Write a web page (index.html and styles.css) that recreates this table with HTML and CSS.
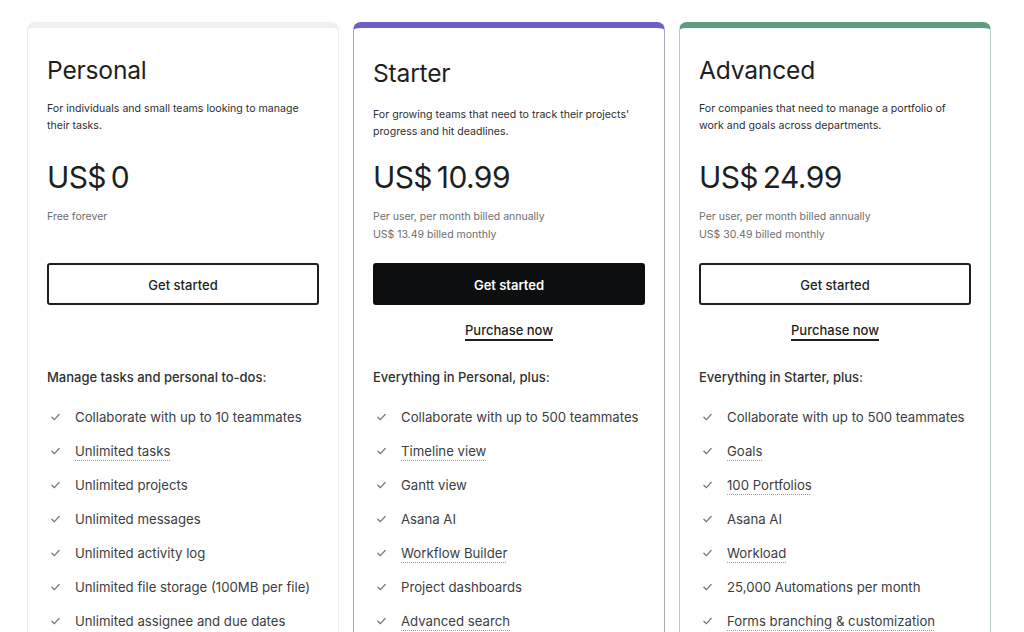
FILE: index.html
```html
<!DOCTYPE html>
<html lang="en">
<head>
<meta charset="utf-8">
<title>Pricing</title>
<link rel="stylesheet" href="styles.css">
</head>
<body>
<main class="plans">
  <section class="card card-personal">
    <div class="intro">
      <h2 class="title">Personal</h2>
      <p class="desc">For individuals and small teams looking to manage their tasks.</p>
    </div>
    <div class="price">US$&#8201;0</div>
    <div class="sub">Free forever</div>
    <a class="btn">Get started</a>
    <div class="purchase purchase-empty"></div>
    <h3 class="feat-head">Manage tasks and personal to-dos:</h3>
    <ul class="feats">
      <li><svg class="chk" viewBox="0 0 10 8"><path d="M1 4.2 L3.8 7 L9 1.2"/></svg><span>Collaborate with up to 10 teammates</span></li>
      <li><svg class="chk" viewBox="0 0 10 8"><path d="M1 4.2 L3.8 7 L9 1.2"/></svg><span class="dot">Unlimited tasks</span></li>
      <li><svg class="chk" viewBox="0 0 10 8"><path d="M1 4.2 L3.8 7 L9 1.2"/></svg><span>Unlimited projects</span></li>
      <li><svg class="chk" viewBox="0 0 10 8"><path d="M1 4.2 L3.8 7 L9 1.2"/></svg><span>Unlimited messages</span></li>
      <li><svg class="chk" viewBox="0 0 10 8"><path d="M1 4.2 L3.8 7 L9 1.2"/></svg><span>Unlimited activity log</span></li>
      <li><svg class="chk" viewBox="0 0 10 8"><path d="M1 4.2 L3.8 7 L9 1.2"/></svg><span>Unlimited file storage (100MB per file)</span></li>
      <li><svg class="chk" viewBox="0 0 10 8"><path d="M1 4.2 L3.8 7 L9 1.2"/></svg><span>Unlimited assignee and due dates</span></li>
    </ul>
  </section>

  <section class="card card-starter">
    <div class="intro">
      <h2 class="title">Starter</h2>
      <p class="desc">For growing teams that need to track their projects' progress and hit deadlines.</p>
    </div>
    <div class="price">US$&#8201;10.99</div>
    <div class="sub">Per user, per month billed annually<br>US$ 13.49 billed monthly</div>
    <a class="btn btn-dark">Get started</a>
    <a class="purchase">Purchase now</a>
    <h3 class="feat-head">Everything in Personal, plus:</h3>
    <ul class="feats">
      <li><svg class="chk" viewBox="0 0 10 8"><path d="M1 4.2 L3.8 7 L9 1.2"/></svg><span>Collaborate with up to 500 teammates</span></li>
      <li><svg class="chk" viewBox="0 0 10 8"><path d="M1 4.2 L3.8 7 L9 1.2"/></svg><span class="dot">Timeline view</span></li>
      <li><svg class="chk" viewBox="0 0 10 8"><path d="M1 4.2 L3.8 7 L9 1.2"/></svg><span>Gantt view</span></li>
      <li><svg class="chk" viewBox="0 0 10 8"><path d="M1 4.2 L3.8 7 L9 1.2"/></svg><span>Asana AI</span></li>
      <li><svg class="chk" viewBox="0 0 10 8"><path d="M1 4.2 L3.8 7 L9 1.2"/></svg><span class="dot">Workflow Builder</span></li>
      <li><svg class="chk" viewBox="0 0 10 8"><path d="M1 4.2 L3.8 7 L9 1.2"/></svg><span>Project dashboards</span></li>
      <li><svg class="chk" viewBox="0 0 10 8"><path d="M1 4.2 L3.8 7 L9 1.2"/></svg><span class="dot">Advanced search</span></li>
    </ul>
  </section>

  <section class="card card-advanced">
    <div class="intro">
      <h2 class="title">Advanced</h2>
      <p class="desc">For companies that need to manage a portfolio of work and goals across departments.</p>
    </div>
    <div class="price">US$&#8201;24.99</div>
    <div class="sub">Per user, per month billed annually<br>US$ 30.49 billed monthly</div>
    <a class="btn">Get started</a>
    <a class="purchase">Purchase now</a>
    <h3 class="feat-head">Everything in Starter, plus:</h3>
    <ul class="feats">
      <li><svg class="chk" viewBox="0 0 10 8"><path d="M1 4.2 L3.8 7 L9 1.2"/></svg><span>Collaborate with up to 500 teammates</span></li>
      <li><svg class="chk" viewBox="0 0 10 8"><path d="M1 4.2 L3.8 7 L9 1.2"/></svg><span class="dot">Goals</span></li>
      <li><svg class="chk" viewBox="0 0 10 8"><path d="M1 4.2 L3.8 7 L9 1.2"/></svg><span class="dot">100 Portfolios</span></li>
      <li><svg class="chk" viewBox="0 0 10 8"><path d="M1 4.2 L3.8 7 L9 1.2"/></svg><span>Asana AI</span></li>
      <li><svg class="chk" viewBox="0 0 10 8"><path d="M1 4.2 L3.8 7 L9 1.2"/></svg><span class="dot">Workload</span></li>
      <li><svg class="chk" viewBox="0 0 10 8"><path d="M1 4.2 L3.8 7 L9 1.2"/></svg><span>25,000 Automations per month</span></li>
      <li><svg class="chk" viewBox="0 0 10 8"><path d="M1 4.2 L3.8 7 L9 1.2"/></svg><span class="dot">Forms branching &amp; customization</span></li>
    </ul>
  </section>
</main>
</body>
</html>
```
FILE: styles.css
```css
* { box-sizing: border-box; }
html, body { margin: 0; padding: 0; background: #fff; }
body {
  font-family: Inter, "Noto Sans", "Liberation Sans", sans-serif;
  color: #1e1f21;
  overflow: hidden;
  height: 632px;
}
.plans {
  display: flex;
  gap: 14px;
  padding: 22px 0 0 27px;
  align-items: flex-start;
}
.card {
  width: 312px;
  background: #fff;
  border: 1px solid #ededed;
  border-top: 6px solid #f0f0f0;
  border-radius: 8px 8px 0 0;
  padding: 0 19px 60px;
  display: flex;
  flex-direction: column;
}
.card-starter {
  border-color: #a9a6c4;
  border-top-color: #6b5ec4;
}
.card-advanced {
  border-color: #b7cfc3;
  border-top-color: #5e9b7f;
}
.intro { height: 129px; padding-top: 26px; }
.card-starter .intro { padding-top: 29px; }
.title {
  margin: 0;
  font-size: 24.6px;
  line-height: 32px;
  font-weight: 400;
  letter-spacing: -0.2px;
  color: #1e1f21;
}
.desc {
  margin: 14px 0 0;
  font-size: 10.6px;
  line-height: 17px;
  color: #2e2f31;
}
.card-starter .desc { margin-top: 17px; }
.price {
  font-size: 30px;
  line-height: 40px;
  font-weight: 400;
  letter-spacing: -0.6px;
  color: #1e1f21;
}
.sub {
  margin-top: 11px;
  min-height: 36px;
  font-size: 10.5px;
  line-height: 18px;
  color: #6d6e6f;
}
.btn {
  display: flex;
  align-items: center;
  justify-content: center;
  margin-top: 19px;
  height: 42px;
  border: 2px solid #1e1f21;
  border-radius: 3px;
  font-size: 13px;
  font-weight: 500;
  color: #1e1f21;
  background: #fff;
  padding-top: 2px;
}
.btn-dark {
  background: #0d0e10;
  border-color: #0d0e10;
  color: #fff;
  font-weight: 600;
}
.purchase {
  display: block;
  align-self: center;
  margin-top: 15px;
  height: 20px;
  font-size: 13px;
  line-height: 20px;
  font-weight: 500;
  color: #1e1f21;
  text-decoration: underline;
  text-decoration-thickness: 1.5px;
  text-underline-offset: 4px;
}
.purchase-empty { width: 1px; }
.feat-head {
  margin: 27px 0 0;
  font-size: 13px;
  line-height: 20px;
  font-weight: 500;
  color: #2e2f31;
}
.feats {
  list-style: none;
  margin: 20px 0 0;
  padding: 0;
  display: flex;
  flex-direction: column;
  gap: 14px;
}
.feats li {
  display: flex;
  align-items: center;
  height: 20px;
  font-size: 13.2px;
  line-height: 20px;
  color: #3c3d3f;
}
.chk {
  width: 9px;
  height: 8px;
  margin: 0 15px 0 4px;
  fill: none;
  stroke: #77787a;
  stroke-width: 1.4;
  stroke-linecap: round;
  stroke-linejoin: round;
  flex: none;
}
.dot {
  text-decoration: underline dotted #9a9a9a;
  text-decoration-thickness: 1px;
  text-underline-offset: 4px;
}
```
